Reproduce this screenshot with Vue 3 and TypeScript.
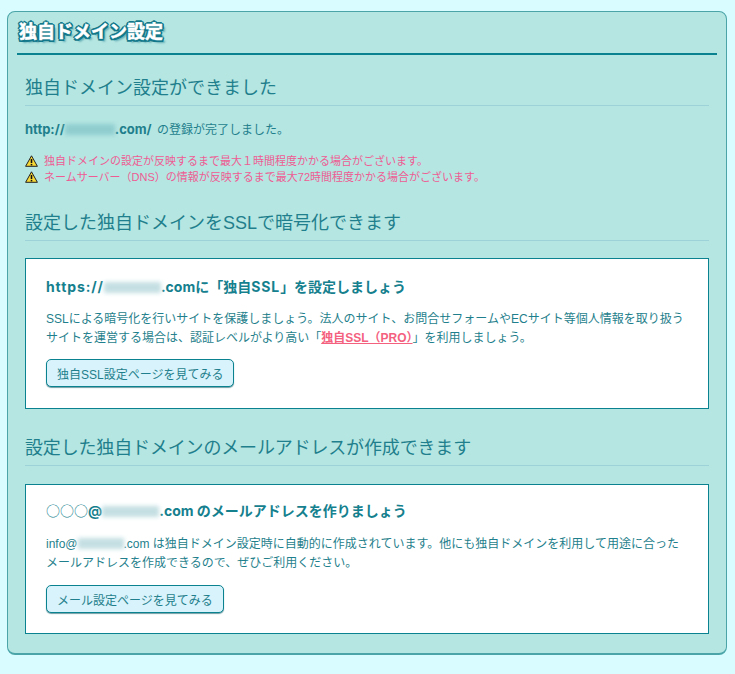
<script setup lang="ts">
</script>

<template>
  <div class="page">
    <div class="panel">
      <h2 class="title">独自ドメイン設定</h2>

      <h3 class="head first">独自ドメイン設定ができました</h3>
      <p class="done"><b>http://<span class="blur w50"></span>.com/</b> の登録が完了しました。</p>
      <ul class="warn">
        <li>
          <svg width="13" height="12" viewBox="0 0 13 12"><path d="M6.5 .8 12.4 11.3H.6Z" fill="#f7d936" stroke="#222" stroke-width="1" stroke-linejoin="round"/><path d="M6.5 4v4" stroke="#111" stroke-width="1.6"/><rect x="5.7" y="8.9" width="1.6" height="1.5" fill="#111"/></svg>
          独自ドメインの設定が反映するまで最大１時間程度かかる場合がございます。
        </li>
        <li>
          <svg width="13" height="12" viewBox="0 0 13 12"><path d="M6.5 .8 12.4 11.3H.6Z" fill="#f7d936" stroke="#222" stroke-width="1" stroke-linejoin="round"/><path d="M6.5 4v4" stroke="#111" stroke-width="1.6"/><rect x="5.7" y="8.9" width="1.6" height="1.5" fill="#111"/></svg>
          ネームサーバー（DNS）の情報が反映するまで最大72時間程度かかる場合がございます。
        </li>
      </ul>

      <h3 class="head">設定した独自ドメインをSSLで暗号化できます</h3>
      <section class="box">
        <h4 class="box-title"><span class="spaced">https://</span><span class="blur w57 white"></span>.comに「独自<span class="spaced">SSL</span>」を設定しましょう</h4>
        <p class="text">SSLによる暗号化を行いサイトを保護しましょう。法人のサイト、お問合せフォームやECサイト等個人情報を取り扱う<br />サイトを運営する場合は、認証レベルがより高い「<a class="link" href="#">独自SSL（PRO）</a>」を利用しましょう。</p>
        <button class="btn" type="button">独自SSL設定ページを見てみる</button>
      </section>

      <h3 class="head second">設定した独自ドメインのメールアドレスが作成できます</h3>
      <section class="box box2">
        <h4 class="box-title"><span class="circles">○○○</span>@<span class="blur w57 white"></span>.com のメールアドレスを作りましょう</h4>
        <p class="text">info@<span class="blur w46 white"></span>.com は独自ドメイン設定時に自動的に作成されています。他にも独自ドメインを利用して用途に合った<br />メールアドレスを作成できるので、ぜひご利用ください。</p>
        <button class="btn" type="button">メール設定ページを見てみる</button>
      </section>
    </div>
  </div>
</template>

<style>
html, body { margin: 0; background: #d8fcff; }
</style>

<style scoped>
.page {
  width: 735px;
  height: 674px;
  box-sizing: border-box;
  padding: 11px 8px 0 7px;
  background: #d8fcff;
  overflow: hidden;
  font-family: "Liberation Sans", "Noto Sans CJK JP", sans-serif;
  color: #1f7f8c;
}
.panel {
  box-sizing: border-box;
  width: 720px;
  height: 644px;
  padding: 0 17px;
  background: #b5e6e2;
  border: 1px solid #4ba5a8;
  border-bottom: 2px solid #4ba5a8;
  border-radius: 8px;
}
.title {
  margin: 0 -8px;
  height: 43px;
  box-sizing: border-box;
  padding: 8px 0 0 2px;
  border-bottom: 2px solid #0a8290;
  font-size: 18px;
  line-height: 24px;
  font-weight: 700;
  color: #fff;
  -webkit-text-stroke: .5px #fff;
  text-shadow: 2px 0 0 #12788a, -2px 0 0 #12788a, 0 2px 0 #12788a, 0 -2px 0 #12788a,
    1.5px 1.5px 0 #12788a, -1.5px -1.5px 0 #12788a, 1.5px -1.5px 0 #12788a, -1.5px 1.5px 0 #12788a,
    3px 3px 2px #5ea9b1;
}
.head {
  margin: 26px 0 0;
  height: 30px;
  box-sizing: border-box;
  border-bottom: 1px solid #9dd3d8;
  font-size: 18px;
  line-height: 25px;
  font-weight: 400;
  color: #1f7f8c;
  white-space: nowrap;
}
.head.first { margin-top: 21px; }
.head.second { margin-top: 27px; letter-spacing: -.16px; }
.done {
  margin: 14px 0 0;
  font-size: 12px;
  line-height: 18px;
}
.done b { font-family: "Inter", "Noto Sans CJK JP", sans-serif; font-size: 13px; margin-right: 2px; }
.warn {
  margin: 14px 0 0;
  padding: 0;
  list-style: none;
  font-size: 11px;
  line-height: 16px;
  color: #ee5c93;
}
.warn li { display: flex; align-items: center; gap: 6px; height: 16px; white-space: nowrap; }
.warn svg { flex: none; }
.box {
  margin-top: 17px;
  box-sizing: border-box;
  height: 151px;
  padding: 18px 20px 0;
  background: #fff;
  border: 1px solid #0a8290;
}
.box2 { margin-top: 18px; height: 150px; padding-top: 15px; }
.box-title {
  margin: 0;
  font-family: "Inter", "Noto Sans CJK JP", sans-serif;
  font-size: 14px;
  line-height: 20px;
  font-weight: 700;
  color: #15808e;
  white-space: nowrap;
}
.spaced { letter-spacing: .9px; }
.circles { font-family: "Noto Sans CJK JP", sans-serif; font-weight: 400; }
.text {
  margin: 13px 0 0;
  font-size: 12px;
  line-height: 19px;
  color: #1f7f8c;
  white-space: nowrap;
}
.box2 .text { margin-top: 14px; }
.link {
  color: #f4617f;
  font-weight: 700;
  text-decoration: underline;
}
.btn {
  display: block;
  margin-top: 11px;
  height: 28px;
  padding: 0 10px;
  font: inherit;
  font-size: 12px;
  color: #1f7f8c;
  background: #d8f3fb;
  border: 1px solid #0a8290;
  border-radius: 5px;
  box-shadow: 0 1px 1px #6f9ea5;
}
.box2 .btn { margin-top: 12px; }
.blur {
  display: inline-block;
  height: 11px;
  vertical-align: -1px;
  background: #8fcdcf;
  filter: blur(2px);
}
.blur.white { background: #c4dfe2; }
.w50 { width: 50px; }
.w57 { width: 57px; }
.w46 { width: 46px; }
</style>
